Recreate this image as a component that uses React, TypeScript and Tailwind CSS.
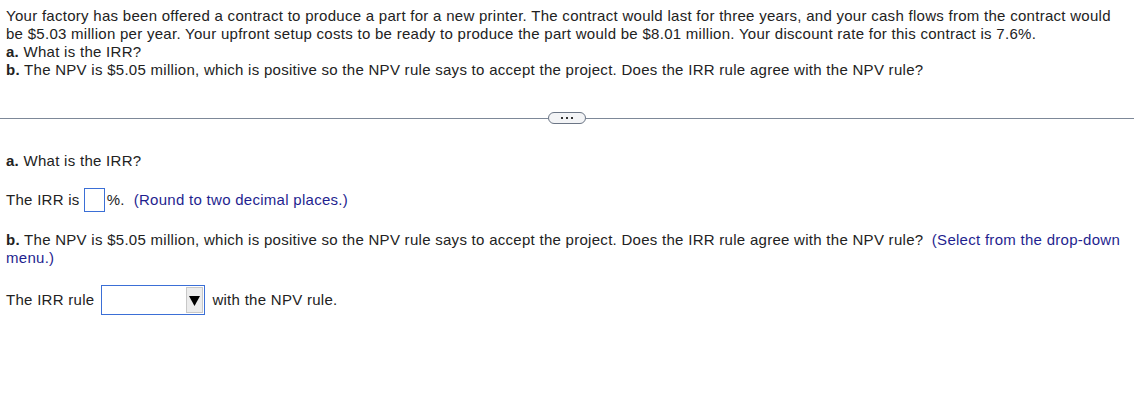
export default function App() {
  return (
    <div className="min-h-[405px] bg-white text-[15px] leading-[18px] tracking-[0.28px] text-[#222]" style={{ fontFamily: '"Liberation Sans", Arial, sans-serif' }}>
      {/* question stem */}
      <div className="pl-[6px] pr-[10px] pt-[7px]">
        <p>
          Your factory has been offered a contract to produce a part for a new printer. The contract would last for three years, and your cash flows from the contract would
          be $5.03 million per year. Your upfront setup costs to be ready to produce the part would be $8.01 million. Your discount rate for this contract is 7.6%.
        </p>
        <p>
          <b>a.</b> What is the IRR?
        </p>
        <p>
          <b>b.</b> The NPV is $5.05 million, which is positive so the NPV rule says to accept the project. Does the IRR rule agree with the NPV rule?
        </p>
      </div>

      {/* divider */}
      <div className="mt-[33px] flex items-center">
        <div className="h-px flex-1 bg-[#7d8898]" />
        <div className="flex h-[12px] w-[38px] items-center justify-center gap-[3px] rounded-full border border-[#6b7585] bg-[#f3f4f6]">
          <span className="h-[2px] w-[2px] bg-[#333]" />
          <span className="h-[2px] w-[2px] bg-[#333]" />
          <span className="h-[2px] w-[2px] bg-[#333]" />
        </div>
        <div className="h-px flex-1 bg-[#7d8898]" />
      </div>

      {/* answers */}
      <div className="pl-[6px] pr-[10px]">
        <p className="mt-[28px]">
          <b>a.</b> What is the IRR?
        </p>

        <div className="mt-[18px] flex items-center">
          <span>The IRR is</span>
          <span className="ml-[4px] inline-block h-[24px] w-[21px] border border-[#3b6fd6] bg-white" />
          <span className="ml-[2px]">%.</span>
          <span className="ml-[9px] text-[#1f1f8f]">(Round to two decimal places.)</span>
        </div>

        <p className="mt-[19px]">
          <b>b.</b> The NPV is $5.05 million, which is positive so the NPV rule says to accept the project. Does the IRR rule agree with the NPV rule?{' '}
          <span className="ml-[4px] text-[#1f1f8f]">(Select from the drop-down menu.)</span>
        </p>

        <div className="mt-[18px] flex items-center">
          <span>The IRR rule</span>
          <div className="ml-[7px] flex h-[30px] w-[104px] items-center justify-end border border-[#3b6fd6] bg-white pr-[1px]">
            <div className="flex h-[26px] w-[17px] items-center justify-center border border-[#c8c8c8] bg-[#ececec]">
              <svg width="11" height="11" viewBox="0 0 11 11">
                <polygon points="0,1 11,1 5.5,11" fill="#000" />
              </svg>
            </div>
          </div>
          <span className="ml-[7px]">with the NPV rule.</span>
        </div>
      </div>
    </div>
  );
}
